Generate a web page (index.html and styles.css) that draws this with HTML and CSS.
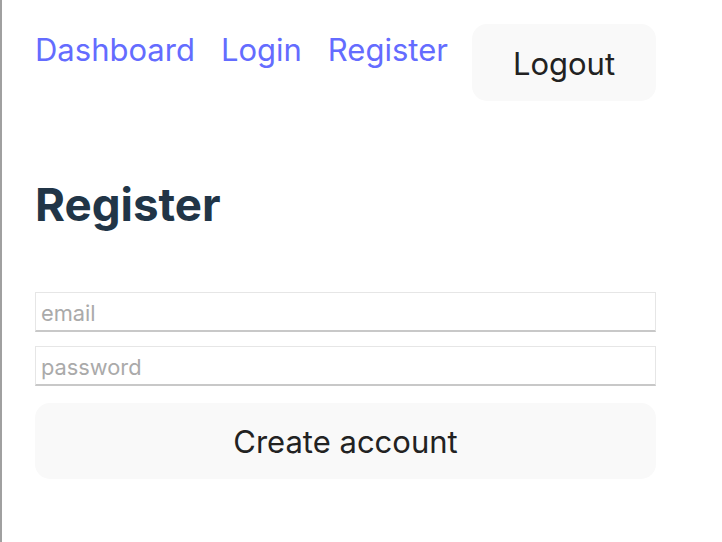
FILE: index.html
```html
<!DOCTYPE html>
<html lang="en">
<head>
<meta charset="utf-8">
<title>Register</title>
<link rel="stylesheet" href="styles.css">
</head>
<body>
<div class="page">
  <nav class="nav">
    <a href="#" class="nav-link">Dashboard</a>
    <a href="#" class="nav-link">Login</a>
    <a href="#" class="nav-link">Register</a>
    <button class="btn btn-logout" type="button">Logout</button>
  </nav>
  <h2 class="title">Register</h2>
  <form class="form">
    <input class="field" type="email" placeholder="email">
    <input class="field" type="password" placeholder="password">
    <button class="btn btn-wide" type="button">Create account</button>
  </form>
</div>
</body>
</html>
```
FILE: styles.css
```css
html, body {
  margin: 0;
  padding: 0;
  background: #ffffff;
}
body {
  font-family: Inter, "Liberation Sans", sans-serif;
  border-left: 2px solid #a0a0a0;
  min-height: 542px;
  box-sizing: border-box;
}
.page {
  width: 621px;
  padding: 24px 0 0 33px;
}
.nav {
  display: flex;
  align-items: flex-start;
  gap: 26px;
}
.nav-link {
  color: #646cff;
  text-decoration: none;
  font-size: 31px;
  line-height: 43.2px;
  font-weight: 400;
  margin-top: 4px;
}
.btn {
  font-family: Inter, "Liberation Sans", sans-serif;
  font-size: 31px;
  line-height: 43.2px;
  font-weight: 400;
  color: #222222;
  background: #f9f9f9;
  border: 0;
  border-radius: 15px;
  cursor: pointer;
}
.btn-logout {
  padding: 18px 41px 16px;
  margin-left: -2px;
}
.title {
  margin: 78px 0 0;
  font-size: 45.7px;
  line-height: 52px;
  font-weight: 700;
  color: #213547;
}
.form {
  display: flex;
  flex-direction: column;
  gap: 14px;
  margin-top: 61px;
}
.field {
  box-sizing: border-box;
  height: 40px;
  width: 100%;
  margin: 0;
  padding: 3px 5px 0;
  font-family: Inter, "Liberation Sans", sans-serif;
  font-size: 21.8px;
  border: 1px solid #e6e6e6;
  border-bottom: 2px solid #c8c8c8;
  border-radius: 0;
  background: #fff;
  outline: none;
}
.field::placeholder {
  color: #aaaaaa;
}
.btn-wide {
  width: 100%;
  height: 76px;
  padding: 0;
  margin-top: 3px;
}
```
